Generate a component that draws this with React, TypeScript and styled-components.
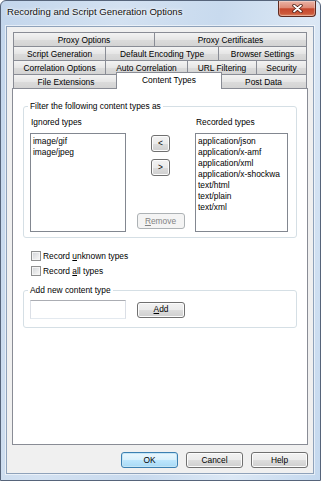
import React from 'react';
import styled, { createGlobalStyle, css } from 'styled-components';

const GlobalStyle = createGlobalStyle`
  html, body {
    margin: 0;
    padding: 0;
    background: #ffffff;
  }
  body {
    font-family: "Liberation Sans", Arial, sans-serif;
    font-size: 8.4px;
    color: #000000;
  }
  #root {
    width: 321px;
    height: 481px;
  }
`;

const Window = styled.div`
  box-sizing: border-box;
  width: 321px;
  height: 481px;
  display: flex;
  flex-direction: column;
  padding: 0 6px 6px 5px;
  border: 1px solid #56647a;
  border-radius: 6px 6px 0 0;
  background: linear-gradient(
    100deg,
    #c3d6ec 0%,
    #d3e1f1 30%,
    #c8daee 55%,
    #dce8f5 78%,
    #c4d8ee 100%
  );
`;

const TitleBar = styled.div`
  height: 25px;
  display: flex;
  align-items: flex-start;
`;

const Title = styled.span`
  margin: 5px 0 0 1px;
  font-size: 9.6px;
  line-height: 12px;
  color: #111111;
  white-space: nowrap;
  text-shadow: 0 0 4px #ffffff, 0 0 2px #ffffff;
`;

const CloseButton = styled.div`
  box-sizing: border-box;
  margin-left: auto;
  margin-right: -2px;
  width: 38px;
  height: 16px;
  border: 1px solid #5e2a20;
  border-top: none;
  border-radius: 0 0 4px 4px;
  background: linear-gradient(
    to bottom,
    #eab3a6 0%,
    #de8a76 45%,
    #c6472d 52%,
    #cc5a3b 85%,
    #e0906f 100%
  );
  box-shadow: inset 0 0 0 1px rgba(255, 255, 255, 0.3);
  display: flex;
  align-items: center;
  justify-content: center;
`;

const Client = styled.div`
  flex: 1;
  box-sizing: border-box;
  display: flex;
  flex-direction: column;
  padding: 5px 5px 5px 5px;
  background: #f0f0f0;
  border: 1px solid #8fa2ba;
  box-shadow: 0 0 0 1px rgba(255, 255, 255, 0.55);
`;

const TabStrip = styled.div`
  display: flex;
  flex-direction: column;
  padding: 0 1px;
`;

const TabRow = styled.div`
  display: flex;
  height: 14px;
  align-items: flex-start;
`;

const Tab = styled.div<{ $width: number; $active?: boolean }>`
  box-sizing: border-box;
  flex: none;
  width: ${(p) => p.$width}px;
  height: 14px;
  border-top: 1px solid #898c95;
  border-left: 1px solid #898c95;
  background: linear-gradient(
    to bottom,
    #f3f3f3 0%,
    #e6e6e6 50%,
    #dcdcdc 51%,
    #d3d3d3 100%
  );
  display: flex;
  align-items: center;
  justify-content: center;
  line-height: 12px;
  white-space: nowrap;

  &:last-child {
    border-right: 1px solid #898c95;
  }

  ${(p) =>
    p.$active &&
    css`
      position: relative;
      z-index: 1;
      width: ${p.$width + 4}px;
      height: 17px;
      margin: -2px -2px -1px -2px;
      padding-top: 1px;
      align-items: flex-start;
      background: #ffffff;
      border-right: 1px solid #898c95;
    `}
`;

const Panel = styled.div`
  box-sizing: border-box;
  height: 357px;
  display: flex;
  flex-direction: column;
  padding: 12px 10px 0;
  background: #ffffff;
  border: 1px solid #898c95;
`;

const Group = styled.fieldset<{ $top?: number }>`
  margin: ${(p) => p.$top ?? 0}px 0 0;
  padding: 5px 8px 5px 6px;
  min-width: 0;
  border: 1px solid #d5dfe5;
  border-radius: 3px;
`;

const AddGroup = styled(Group)`
  padding-top: 4px;
  padding-bottom: 8px;
`;

const Caption = styled.legend`
  margin-left: -2px;
  padding: 0 2px;
  line-height: 11px;
  white-space: nowrap;
`;

const FilterRow = styled.div`
  display: flex;
`;

const ListColumn = styled.div<{ $width: number }>`
  width: ${(p) => p.$width}px;
  display: flex;
  flex-direction: column;
  gap: 5px;
`;

const ColumnLabel = styled.div`
  height: 11px;
  line-height: 11px;
  padding-left: 1px;
  white-space: nowrap;
`;

const ListBox = styled.div`
  box-sizing: border-box;
  height: 99px;
  padding: 2px 2px;
  overflow: hidden;
  background: #ffffff;
  border: 1px solid #828790;
`;

const ListItem = styled.div`
  line-height: 11px;
  white-space: nowrap;
`;

const MoveColumn = styled.div`
  width: 69px;
  display: flex;
  flex-direction: column;
  align-items: center;
  padding: 18px 0 3px;
  box-sizing: border-box;
`;

const PushButton = styled.div<{
  $width: number;
  $height: number;
  $primary?: boolean;
  $disabled?: boolean;
  $gap?: number;
}>`
  box-sizing: border-box;
  flex: none;
  width: ${(p) => p.$width}px;
  height: ${(p) => p.$height}px;
  margin-top: ${(p) => p.$gap ?? 0}px;
  display: flex;
  align-items: center;
  justify-content: center;
  line-height: 11px;
  border: 1px solid #707070;
  border-radius: 3px;
  background: linear-gradient(
    to bottom,
    #f2f2f2 0%,
    #ebebeb 50%,
    #dddddd 51%,
    #cfcfcf 100%
  );
  box-shadow: inset 0 0 0 1px #fcfcfc;
  white-space: nowrap;

  ${(p) =>
    p.$primary &&
    css`
      border-color: #3c7fb1;
      background: linear-gradient(
        to bottom,
        #eaf6fd 0%,
        #d9f0fc 50%,
        #bee6fd 51%,
        #a7d9f5 100%
      );
      box-shadow: inset 0 0 0 1px #c4e5f6;
    `}

  ${(p) =>
    p.$disabled &&
    css`
      color: #838383;
      border-color: #adb2b5;
      background: #f4f4f4;
      box-shadow: none;
    `}
`;

const RemoveButton = styled(PushButton)`
  margin-top: auto;
`;

const Checks = styled.div`
  margin-top: 10px;
  padding-left: 8px;
  display: flex;
  flex-direction: column;
`;

const CheckRow = styled.label`
  height: 15px;
  display: flex;
  align-items: center;
  gap: 2px;
  white-space: nowrap;
`;

const CheckBox = styled.span`
  box-sizing: border-box;
  width: 10px;
  height: 10px;
  border: 1px solid #8e8f8f;
  background: linear-gradient(135deg, #cfd2d6 0%, #eeeeee 70%, #f8f8f8 100%);
  box-shadow: inset 0 0 0 1px #f4f4f4;
`;

const AddRow = styled.div`
  display: flex;
  align-items: center;
  gap: 11px;
`;

const TextBox = styled.div`
  box-sizing: border-box;
  width: 96px;
  height: 19px;
  background: #ffffff;
  border: 1px solid #dbdfe6;
  border-top-color: #abadb3;
  border-bottom-color: #e3e9ef;
`;

const DialogButtons = styled.div`
  margin-top: 7px;
  display: flex;
  justify-content: flex-end;
  gap: 8px;
`;

const tabRows = [
  [
    { label: 'Proxy Options', width: 141 },
    { label: 'Proxy Certificates', width: 153 },
  ],
  [
    { label: 'Script Generation', width: 92 },
    { label: 'Default Encoding Type', width: 113 },
    { label: 'Browser Settings', width: 89 },
  ],
  [
    { label: 'Correlation Options', width: 92 },
    { label: 'Auto Correlation', width: 82 },
    { label: 'URL Filtering', width: 69 },
    { label: 'Security', width: 51 },
  ],
  [
    { label: 'File Extensions', width: 105 },
    { label: 'Content Types', width: 102 },
    { label: 'Post Data', width: 87 },
  ],
];

const ignored = ['image/gif', 'image/jpeg'];
// the listbox is narrower than the longest entry, only this much shows
const recorded = [
  'application/json',
  'application/x-amf',
  'application/xml',
  'application/x-shockwa',
  'text/html',
  'text/plain',
  'text/xml',
];

const CloseGlyph = () => (
  <svg width="11" height="9" viewBox="0 0 11 9">
    <path d="M2 1.5 L9 7.5 M9 1.5 L2 7.5" stroke="#4a1a10" strokeWidth="3.4" strokeLinecap="round" />
    <path d="M2 1.5 L9 7.5 M9 1.5 L2 7.5" stroke="#ffffff" strokeWidth="1.8" strokeLinecap="round" />
  </svg>
);

const App = () => {
  return (
    <>
      <GlobalStyle />
      <Window>
        <TitleBar>
          <Title>Recording and Script Generation Options</Title>
          <CloseButton>
            <CloseGlyph />
          </CloseButton>
        </TitleBar>
        <Client>
          <TabStrip>
            {tabRows.map((row, i) => (
              <TabRow key={i}>
                {row.map((tab) => (
                  <Tab key={tab.label} $width={tab.width} $active={tab.label === 'Content Types'}>
                    {tab.label}
                  </Tab>
                ))}
              </TabRow>
            ))}
          </TabStrip>
          <Panel>
            <Group>
              <Caption>Filter the following content types as</Caption>
              <FilterRow>
                <ListColumn $width={96}>
                  <ColumnLabel>Ignored types</ColumnLabel>
                  <ListBox>
                    {ignored.map((t) => (
                      <ListItem key={t}>{t}</ListItem>
                    ))}
                  </ListBox>
                </ListColumn>
                <MoveColumn>
                  <PushButton $width={19} $height={17}>&lt;</PushButton>
                  <PushButton $width={19} $height={17} $gap={7}>&gt;</PushButton>
                  <RemoveButton $width={48} $height={16} $disabled>
                    <u>R</u>emove
                  </RemoveButton>
                </MoveColumn>
                <ListColumn $width={93}>
                  <ColumnLabel>Recorded types</ColumnLabel>
                  <ListBox>
                    {recorded.map((t) => (
                      <ListItem key={t}>{t}</ListItem>
                    ))}
                  </ListBox>
                </ListColumn>
              </FilterRow>
            </Group>
            <Checks>
              <CheckRow>
                <CheckBox />
                <span>
                  Record <u>u</u>nknown types
                </span>
              </CheckRow>
              <CheckRow>
                <CheckBox />
                <span>
                  Record <u>a</u>ll types
                </span>
              </CheckRow>
            </Checks>
            <AddGroup $top={7}>
              <Caption>Add new content type</Caption>
              <AddRow>
                <TextBox />
                <PushButton $width={48} $height={16}>
                  <u>A</u>dd
                </PushButton>
              </AddRow>
            </AddGroup>
          </Panel>
          <DialogButtons>
            <PushButton $width={57} $height={16} $primary>OK</PushButton>
            <PushButton $width={57} $height={16}>Cancel</PushButton>
            <PushButton $width={57} $height={16}>Help</PushButton>
          </DialogButtons>
        </Client>
      </Window>
    </>
  );
};

export default App;
